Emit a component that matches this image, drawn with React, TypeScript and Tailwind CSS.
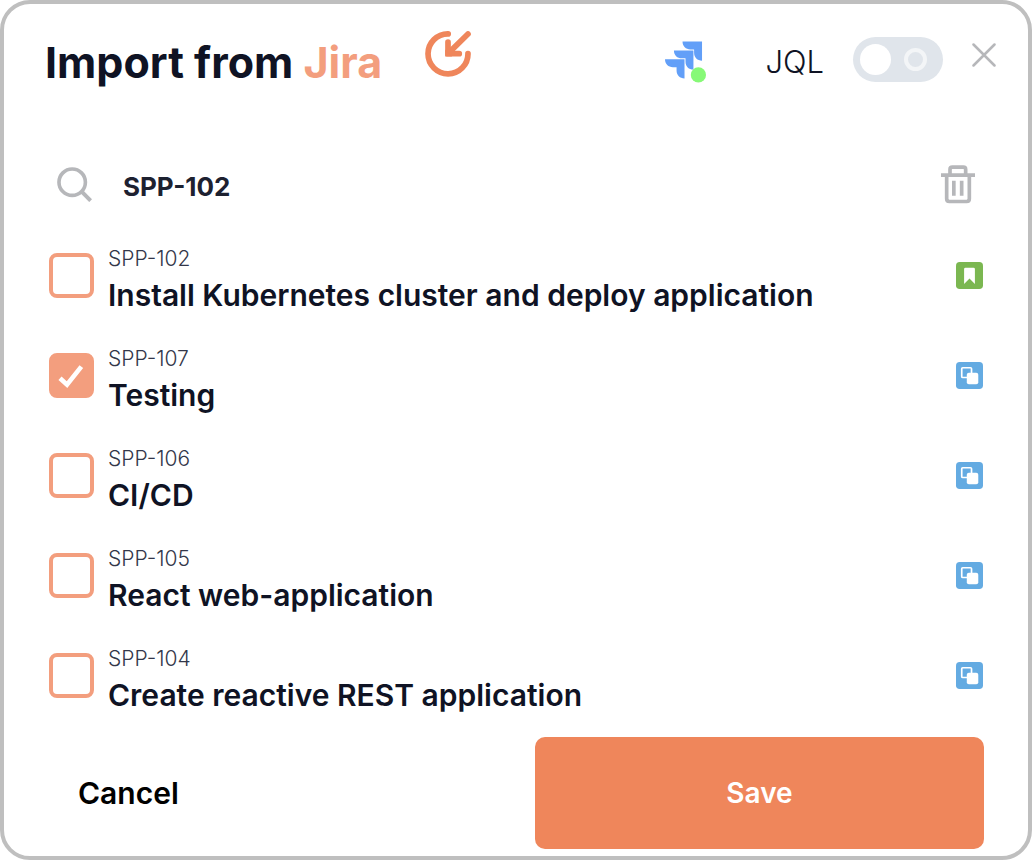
import { useState } from "react";

type IssueKind = "story" | "subtask";

interface Issue {
  id: string;
  title: string;
  kind: IssueKind;
}

const ISSUES: Issue[] = [
  { id: "SPP-102", title: "Install Kubernetes cluster and deploy application", kind: "story" },
  { id: "SPP-107", title: "Testing", kind: "subtask" },
  { id: "SPP-106", title: "CI/CD", kind: "subtask" },
  { id: "SPP-105", title: "React web-application", kind: "subtask" },
  { id: "SPP-104", title: "Create reactive REST application", kind: "subtask" },
];

function ImportIcon() {
  return (
    <svg viewBox="75 35 137 137" className="size-[46px] shrink-0" fill="none" stroke="#ef865b" strokeWidth="17" strokeLinecap="round" aria-hidden="true">
      <path d="M144 43.500A59.500 59.500 0 1 0 203 102" />
      <path d="M203 44 148 98" />
      <path d="M143.500 68V102.500H177" strokeLinejoin="round" />
      <path d="M135 90v21h21z" fill="#ef865b" stroke="none" />
    </svg>
  );
}

function JiraLogo() {
  return (
    <svg viewBox="44 47 124 126" className="h-[42px] w-[41px] shrink-0" aria-hidden="true">
      <g fill="#629ff8">
        <path d="M97 48h59v58c-14 0-24-10-24-24V72h-11c-14 0-24-10-24-24z" />
        <path d="M71 75h59v58c-14 0-24-10-24-24V99H95c-14 0-24-10-24-24z" />
        <path d="M44 102h59v58c-14 0-24-10-24-24v-10H68c-14 0-24-10-24-24z" />
      </g>
      <circle cx="145" cy="149" r="23" fill="#87f977" />
    </svg>
  );
}

function CloseIcon() {
  return (
    <svg viewBox="0 0 24 24" className="size-6" stroke="#b6b7ba" strokeWidth="2.500" strokeLinecap="round" aria-hidden="true">
      <path d="M1.500 1.500 22.500 22.500M22.500 1.500 1.500 22.500" />
    </svg>
  );
}

function SearchIcon() {
  return (
    <svg viewBox="80 47 106 106" className="size-[35px]" fill="none" stroke="#b6b7ba" strokeWidth="11" role="img" aria-label="Search issues">
      <circle cx="126" cy="93" r="40" />
      <path d="M154 121 182 149" strokeWidth="12" />
    </svg>
  );
}

function TrashIcon() {
  return (
    <svg viewBox="64 47 102 116" className="h-[39px] w-[34px]" fill="none" stroke="#b6b7ba" strokeWidth="11" aria-hidden="true">
      <path d="M64 77h102" />
      <path d="M91 77V60q0-7 7-7h33q7 0 7 7v17" />
      <path d="M81 77v71q0 8 8 8h52q8 0 8-8V77" />
      <path d="M102.500 94v45M126 94v45" />
    </svg>
  );
}

function KindIcon({ kind }: { kind: IssueKind }) {
  if (kind === "story") {
    return (
      <svg viewBox="0 0 80 80" className="size-[27px] shrink-0" role="img" aria-label="Story">
        <rect width="80" height="80" rx="11" fill="#7bb751" />
        <path d="M28 17h24q4 0 4 4v44L40 49 24 65V21q0-4 4-4z" fill="#fff" />
      </svg>
    );
  }
  return (
    <svg viewBox="0 0 80 80" className="size-[27px] shrink-0" role="img" aria-label="Sub-task">
      <rect width="80" height="80" rx="11" fill="#64abe2" />
      <rect x="17" y="17" width="29" height="29" rx="3" fill="none" stroke="#fff" strokeWidth="5" />
      <rect x="32" y="32" width="34" height="34" rx="6" fill="#fff" />
    </svg>
  );
}

function IssueRow({ issue, checked, onToggle }: { issue: Issue; checked: boolean; onToggle: () => void }) {
  return (
    <li>
      <label className="flex cursor-pointer items-start">
        <span className="mt-2 grid shrink-0">
          <input
            type="checkbox"
            checked={checked}
            onChange={onToggle}
            className="peer col-start-1 row-start-1 size-[45px] appearance-none rounded-lg border-4 border-[#f39e7e] bg-white checked:bg-[#f39e7e]"
          />
          <svg
            viewBox="58 70 135 135"
            className="pointer-events-none col-start-1 row-start-1 hidden size-[45px] peer-checked:block"
            fill="none"
            stroke="#fff"
            strokeWidth="14"
            aria-hidden="true"
          >
            <path d="M91 146 112 165 155 111" />
          </svg>
        </span>
        <span className="ml-[14px] flex min-w-0 flex-1 flex-col">
          <span className="text-[21px] leading-7 font-light text-[#33374a]">{issue.id}</span>
          <span className="mt-0.5 text-[30px] leading-10 font-semibold text-[#0f1324]">{issue.title}</span>
        </span>
        <span className="mt-[17px]">
          <KindIcon kind={issue.kind} />
        </span>
      </label>
    </li>
  );
}

export default function App() {
  const [selected, setSelected] = useState<string[]>(["SPP-107"]);
  const [query, setQuery] = useState("SPP-102");
  const [jql, setJql] = useState(false);

  const toggle = (id: string) =>
    setSelected((ids) => (ids.includes(id) ? ids.filter((x) => x !== id) : [...ids, id]));

  return (
    <main className="flex min-h-screen flex-col rounded-[30px] border-4 border-[#bfbfbf] bg-white pb-[7px] font-[Inter,sans-serif]">
      <header className="flex items-start pt-[27px] pr-8 pl-[41px]">
        <h1 className="pt-[3px] text-[43px] leading-[56px] font-bold text-[#0f1324]">
          Import from <span className="text-[#f39e7e]">Jira</span>
        </h1>
        <span className="ml-[43px]">
          <ImportIcon />
        </span>
        <span className="mt-[10px] ml-auto">
          <JiraLogo />
        </span>
        <label className="mt-1.5 ml-[59px] flex items-center gap-[29px]">
          <span className="pt-1 text-[31px] leading-10 font-light text-[#0f1324]">JQL</span>
          <span className="grid items-center">
            <input
              type="checkbox"
              role="switch"
              checked={jql}
              onChange={(e) => setJql(e.target.checked)}
              className="peer col-start-1 row-start-1 h-[45px] w-[90px] appearance-none rounded-full bg-[#e0e5eb]"
            />
            <span className="pointer-events-none col-start-1 row-start-1 flex items-center justify-between pr-4 pl-[7px] peer-checked:flex-row-reverse">
              <span className="size-[31px] rounded-full bg-white" />
              <span className="size-[23px] rounded-full border-4 border-[#f3f5f7]" />
            </span>
          </span>
        </label>
        <button type="button" aria-label="Close" className="mt-3 ml-[29px]">
          <CloseIcon />
        </button>
      </header>

      <div className="mt-[72px] flex items-center px-[53px]">
        <label htmlFor="issue-search">
          <SearchIcon />
        </label>
        <input
          id="issue-search"
          type="text"
          value={query}
          onChange={(e) => setQuery(e.target.value)}
          className="ml-[31px] h-11 min-w-0 flex-1 pt-1 text-[26px] font-bold text-[#1d2130] outline-none"
        />
        <button type="button" aria-label="Clear search" onClick={() => setQuery("")}>
          <TrashIcon />
        </button>
      </div>

      <ul className="mt-[39px] flex flex-col gap-[30px] px-[45px]">
        {ISSUES.map((issue) => (
          <IssueRow
            key={issue.id}
            issue={issue}
            checked={selected.includes(issue.id)}
            onToggle={() => toggle(issue.id)}
          />
        ))}
      </ul>

      <footer className="mt-auto flex items-center justify-between pr-11 pl-[74px]">
        <button type="button" className="text-[30px] leading-10 font-semibold text-black">
          Cancel
        </button>
        <button type="button" className="h-28 w-[449px] rounded-[10px] bg-[#ef865b] text-[28px] font-semibold text-white">
          Save
        </button>
      </footer>
    </main>
  );
}
